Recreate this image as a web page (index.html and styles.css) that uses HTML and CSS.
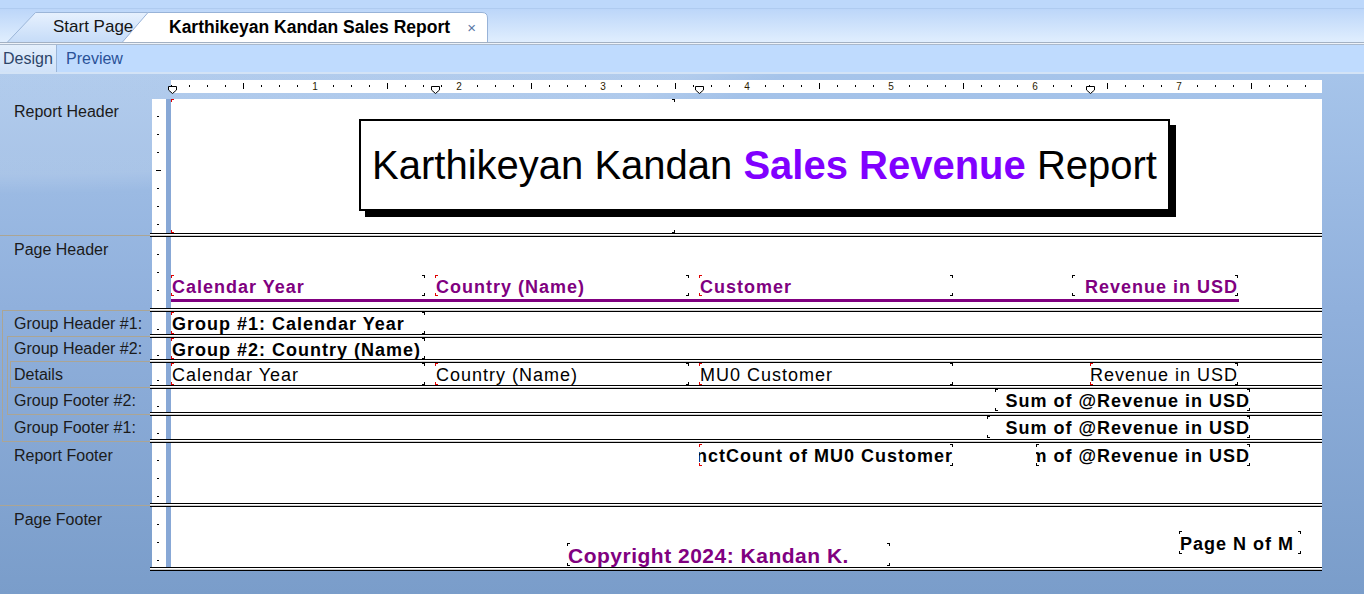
FILE: index.html
```html
<!DOCTYPE html>
<html>
<head>
<meta charset="utf-8">
<title>Karthikeyan Kandan Sales Report</title>
<link rel="stylesheet" href="styles.css">
</head>
<body>
<div class="app">
  <div class="topstrip"></div>
  <div class="tabbar">
    <div class="tab start">
      <svg width="145" height="30" viewBox="0 0 145 30"><defs><linearGradient id="sg" x1="0" y1="0" x2="0" y2="1"><stop offset="0" stop-color="#e7f1fe"/><stop offset="1" stop-color="#c6dcf8"/></linearGradient></defs><path d="M0.5 30 L28.5 0.5 H144.5 V30" fill="url(#sg)" stroke="#9bb5d8"/></svg>
      <span class="txt">Start Page</span>
    </div>
    <div class="tab active">
      <svg width="366" height="30" viewBox="0 0 366 30"><path d="M0.5 30 L26 0.5 H360 Q365.5 0.5 365.5 6 V30" fill="#fff" stroke="#98b3d8"/></svg>
      <span class="txt">Karthikeyan Kandan Sales Report</span>
      <span class="close">×</span>
    </div>
  </div>
  <div class="sep"></div>
  <div class="subtabs">
    <div class="subtab on">Design</div>
    <div class="subtab">Preview</div>
  </div>
  <div class="main">
    <div class="ruler">
      <div class="nums"><span><i>1</i></span><span><i>2</i></span><span><i>3</i></span><span><i>4</i></span><span><i>5</i></span><span><i>6</i></span><span><i>7</i></span></div>
      <svg class="mk m0" width="9" height="8" viewBox="0 0 9 8"><path d="M0.5 0.5 H8.5 V4 L4.5 7.5 L0.5 4 Z" fill="#fff" stroke="#000"/></svg>
      <svg class="mk m1" width="9" height="8" viewBox="0 0 9 8"><path d="M0.5 0.5 H8.5 V4 L4.5 7.5 L0.5 4 Z" fill="#fff" stroke="#000"/></svg>
      <svg class="mk m2" width="9" height="8" viewBox="0 0 9 8"><path d="M0.5 0.5 H8.5 V4 L4.5 7.5 L0.5 4 Z" fill="#fff" stroke="#000"/></svg>
      <svg class="mk m3" width="9" height="8" viewBox="0 0 9 8"><path d="M0.5 0.5 H8.5 V4 L4.5 7.5 L0.5 4 Z" fill="#fff" stroke="#000"/></svg>
    </div>

    <div class="designer">
      <!-- Report Header -->
      <div class="row h-rh">
        <div class="lbl top">Report Header</div>
        <div class="band"><div class="vr"></div><div class="bar"></div>
          <div class="canvas stack">
            <div class="f empty red-l"></div>
            <div class="title">Karthikeyan Kandan&nbsp;<b>Sales Revenue</b>&nbsp;Report</div>
          </div>
        </div>
      </div>
      <div class="row dv"><div class="lbl d-full"></div><div class="dline"></div></div>

      <!-- Page Header -->
      <div class="row h-ph">
        <div class="lbl top">Page Header</div>
        <div class="band"><div class="vr"></div><div class="bar"></div>
          <div class="canvas col">
            <div class="fields ph-fields">
              <div class="f b pu w254 h21 red-l">Calendar Year</div>
              <div class="f b pu w254 h21 ml10 red-l">Country (Name)</div>
              <div class="f b pu w254 h21 ml10 red-l">Customer</div>
              <div class="f b pu r w166 h21 ml119">Revenue in USD</div>
            </div>
            <div class="pline"></div>
          </div>
        </div>
      </div>
      <div class="row dv"><div class="lbl d-ph-g1"></div><div class="dline"></div></div>

      <!-- Group Header #1 -->
      <div class="row h22">
        <div class="lbl mid g1">Group Header #1:</div>
        <div class="band"><div class="vr"></div><div class="bar"></div>
          <div class="canvas">
            <div class="f b w254 red-l">Group #1: Calendar Year</div>
          </div>
        </div>
      </div>
      <div class="row dv"><div class="lbl d-g1-g2"></div><div class="dline"></div></div>

      <!-- Group Header #2 -->
      <div class="row h21">
        <div class="lbl mid g2">Group Header #2:</div>
        <div class="band"><div class="vr"></div><div class="bar"></div>
          <div class="canvas">
            <div class="f b w254 h21 red-l">Group #2: Country (Name)</div>
          </div>
        </div>
      </div>
      <div class="row dv"><div class="lbl d-g2-det"></div><div class="dline"></div></div>

      <!-- Details -->
      <div class="row h22">
        <div class="lbl mid det">Details</div>
        <div class="band"><div class="vr"></div><div class="bar"></div>
          <div class="canvas">
            <div class="f w254 red-l">Calendar Year</div>
            <div class="f w254 ml10 red-l">Country (Name)</div>
            <div class="f w254 ml10 red-l">MU0 Customer</div>
            <div class="f r w148 ml137 red-l">Revenue in USD</div>
          </div>
        </div>
      </div>
      <div class="row dv"><div class="lbl d-det-gf2"></div><div class="dline"></div></div>

      <!-- Group Footer #2 -->
      <div class="row h23">
        <div class="lbl mid gf2">Group Footer #2:</div>
        <div class="band"><div class="vr"></div><div class="bar"></div>
          <div class="canvas">
            <div class="f b r w255 ml824">Sum of @Revenue in USD</div>
          </div>
        </div>
      </div>
      <div class="row dv"><div class="lbl d-gf2-gf1"></div><div class="dline"></div></div>

      <!-- Group Footer #1 -->
      <div class="row h23">
        <div class="lbl mid gf1">Group Footer #1:</div>
        <div class="band"><div class="vr"></div><div class="bar"></div>
          <div class="canvas">
            <div class="f b r w263 ml816">Sum of @Revenue in USD</div>
          </div>
        </div>
      </div>
      <div class="row dv"><div class="lbl d-gf1-rf"></div><div class="dline"></div></div>

      <!-- Report Footer -->
      <div class="row h60">
        <div class="lbl top">Report Footer</div>
        <div class="band"><div class="vr"></div><div class="bar"></div>
          <div class="canvas">
            <div class="f b r clip w254 ml528 mt1 red-l">DistinctCount of MU0 Customer</div>
            <div class="f b r clip w214 ml83 mt1">Sum of @Revenue in USD</div>
          </div>
        </div>
      </div>
      <div class="row dv"><div class="lbl d-full"></div><div class="dline"></div></div>

      <!-- Page Footer -->
      <div class="row h60">
        <div class="lbl top">Page Footer</div>
        <div class="band"><div class="vr"></div><div class="bar"></div>
          <div class="canvas">
            <div class="f b pu copy w323 h23 ml396 mt36">Copyright 2024: Kandan K.</div>
            <div class="f b w122 h23 ml289 mt24">Page N of M</div>
          </div>
        </div>
      </div>
      <div class="row dv"><div class="lbl"></div><div class="dline"></div></div>
    </div>
  </div>
</div>
</body>
</html>
```

FILE: styles.css
```css
* { box-sizing: border-box; margin: 0; padding: 0; }
html, body { width: 1364px; height: 594px; overflow: hidden; }
body {
  font-family: "Liberation Sans", Arial, sans-serif;
  background: #7a9dca;
  color: #000;
}
.app { width: 1364px; height: 594px; display: flex; flex-direction: column; }

/* ---------- top chrome ---------- */
.topstrip { height: 9px; background: #bdd8fb; border-bottom: 1px solid #afcbf0; }
.tabbar {
  height: 33px;
  background: linear-gradient(#bcd6f9, #e0eefe);
  display: flex;
  align-items: flex-end;
  padding-left: 7px;
}
.tab { position: relative; height: 30px; display: flex; align-items: center; flex: none; }
.tab svg { position: absolute; left: 0; top: 0; }
.tab span { position: relative; white-space: nowrap; }
.start { width: 145px; }
.start .txt { margin-left: 46px; font-size: 17px; color: #151515; }
.active { width: 366px; margin-left: -30px; }
.active .txt { margin-left: 47px; font-size: 17.5px; font-weight: bold; color: #000; }
.close { margin-left: auto; margin-right: 12px; color: #5877a6; font-size: 15px; }

.sep { height: 3px; border-top: 1px solid #a3b1c3; border-bottom: 1px solid #aab9cc; background: #eef3f9; }
.subtabs {
  height: 29px;
  background: #bfdbfe;
  border-bottom: 2px solid #d3e3f6;
  display: flex;
}
.subtab { font-size: 16px; line-height: 27px; color: #2a5298; margin-left: 9px; }
.subtab.on {
  margin-left: 0;
  width: 57px;
  padding-left: 3px;
  background: linear-gradient(#e4effc, #d0e2f8);
  border-right: 1px solid #9cb6d8;
  color: #2d4569;
}

/* ---------- workspace ---------- */
.main {
  flex: 1;
  padding-top: 6px;
  background:
    radial-gradient(ellipse 1100px 240px at 0% -12%, rgba(255,255,255,0.13) 0 68%, rgba(255,255,255,0) 76%),
    linear-gradient(#a6c4ea, #90b0dc 45%, #7a9dca);
}

.ruler {
  position: relative;
  margin-left: 171px;
  width: 1151px;
  height: 13px;
  background:
    repeating-linear-gradient(to right, #000 0 1px, transparent 1px 144px) 72px 3px / 100% 6px no-repeat,
    repeating-linear-gradient(to right, #000 0 1px, transparent 1px 18px) 0 5px / 100% 2px no-repeat,
    #fff;
}
.nums { display: flex; padding-left: 72px; }
.nums span { flex: none; width: 144px; text-align: center; font-size: 10px; line-height: 13px; }
.nums i { font-style: normal; background: #fff; padding: 0 2px; color: #2a1a00; }
.mk { position: absolute; top: 6px; }
.m0 { left: -3px; }
.m1 { left: 260px; }
.m2 { left: 524px; }
.m3 { left: 915px; }

.designer { margin-top: 6px; width: 1322px; }
.row { display: flex; }
.h-rh { height: 134px; }
.h-ph { height: 71px; }
.h21 { height: 21px; }
.h22 { height: 22px; }
.h23 { height: 23px; }
.h60 { height: 60px; }
.dv { height: 4px; }

.lbl {
  --ln: #aba594;
  width: 150px;
  flex: none;
  padding-left: 14px;
  font-size: 16px;
  color: #1b1b1b;
  white-space: nowrap;
}
.lbl.top { padding-top: 4px; line-height: 18px; }
.lbl.mid { display: flex; align-items: center; padding-top: 1px; }

/* group outline lines in label column */
.d-full { background: linear-gradient(var(--ln), var(--ln)) 0 2px / 100% 1px no-repeat; }
.d-ph-g1 {
  background:
    linear-gradient(var(--ln), var(--ln)) 2px 2px / 100% 1px no-repeat,
    linear-gradient(var(--ln), var(--ln)) 2px 2px / 1px 100% no-repeat;
}
.g1, .gf1 { background: linear-gradient(var(--ln), var(--ln)) 2px 0 / 1px 100% no-repeat; }
.d-g1-g2 {
  background:
    linear-gradient(var(--ln), var(--ln)) 2px 0 / 1px 100% no-repeat,
    linear-gradient(var(--ln), var(--ln)) 7px 2px / 100% 1px no-repeat,
    linear-gradient(var(--ln), var(--ln)) 7px 2px / 1px 100% no-repeat;
}
.g2, .gf2 {
  background:
    linear-gradient(var(--ln), var(--ln)) 2px 0 / 1px 100% no-repeat,
    linear-gradient(var(--ln), var(--ln)) 7px 0 / 1px 100% no-repeat;
}
.d-g2-det {
  background:
    linear-gradient(var(--ln), var(--ln)) 2px 0 / 1px 100% no-repeat,
    linear-gradient(var(--ln), var(--ln)) 7px 0 / 1px 100% no-repeat,
    linear-gradient(var(--ln), var(--ln)) 10px 2px / 100% 1px no-repeat,
    linear-gradient(var(--ln), var(--ln)) 10px 2px / 1px 100% no-repeat;
}
.det {
  background:
    linear-gradient(var(--ln), var(--ln)) 2px 0 / 1px 100% no-repeat,
    linear-gradient(var(--ln), var(--ln)) 7px 0 / 1px 100% no-repeat,
    linear-gradient(var(--ln), var(--ln)) 10px 0 / 1px 100% no-repeat;
}
.d-det-gf2 {
  background:
    linear-gradient(var(--ln), var(--ln)) 2px 0 / 1px 100% no-repeat,
    linear-gradient(var(--ln), var(--ln)) 7px 0 / 1px 100% no-repeat,
    linear-gradient(var(--ln), var(--ln)) 10px 0 / 1px 3px no-repeat,
    linear-gradient(var(--ln), var(--ln)) 10px 2px / 100% 1px no-repeat;
}
.d-gf2-gf1 {
  background:
    linear-gradient(var(--ln), var(--ln)) 2px 0 / 1px 100% no-repeat,
    linear-gradient(var(--ln), var(--ln)) 7px 0 / 1px 3px no-repeat,
    linear-gradient(var(--ln), var(--ln)) 7px 2px / 100% 1px no-repeat;
}
.d-gf1-rf {
  background:
    linear-gradient(var(--ln), var(--ln)) 2px 0 / 1px 3px no-repeat,
    linear-gradient(var(--ln), var(--ln)) 2px 2px / 100% 1px no-repeat;
}

.band { display: flex; margin-left: 2px; flex: none; }
.vr {
  width: 14px;
  flex: none;
  background:
    repeating-linear-gradient(to bottom, transparent 0 71px, #000 71px 72px) 4px 0 / 5px 100% no-repeat,
    repeating-linear-gradient(to bottom, transparent 0 17px, #000 17px 18px) 5px 0 / 2px 100% no-repeat,
    #fff;
}
.bar { width: 5px; flex: none; background: #88a8d6; }
.canvas { width: 1151px; flex: none; background: #fff; display: flex; align-items: flex-start; }
.canvas.stack { display: grid; }
.canvas.stack > * { grid-area: 1 / 1; }
.canvas.col { flex-direction: column; }

.dline {
  width: 1172px;
  height: 4px;
  border-top: 1px solid #000;
  border-bottom: 1px solid #000;
  background: linear-gradient(#fff 0 1px, #cfcfcf 1px);
}

/* ---------- report fields ---------- */
.f {
  --l: #000;
  --r: #000;
  flex: none;
  height: 22px;
  display: flex;
  align-items: center;
  white-space: nowrap;
  padding-left: 1px;
  padding-top: 2px;
  font-size: 18px;
  line-height: 18px;
  letter-spacing: 1px;
  color: #000;
  background:
    linear-gradient(var(--l), var(--l)) 0 0 / 3px 1px,
    linear-gradient(var(--l), var(--l)) 0 0 / 1px 3px,
    linear-gradient(var(--r), var(--r)) 100% 0 / 3px 1px,
    linear-gradient(var(--r), var(--r)) 100% 0 / 1px 3px,
    linear-gradient(var(--l), var(--l)) 0 100% / 3px 1px,
    linear-gradient(var(--l), var(--l)) 0 100% / 1px 3px,
    linear-gradient(var(--r), var(--r)) 100% 100% / 3px 1px,
    linear-gradient(var(--r), var(--r)) 100% 100% / 1px 3px;
  background-repeat: no-repeat;
}
.f.red-l { --l: #e00000; }
.f.r { justify-content: flex-end; padding-left: 0; }
.f.clip { overflow: hidden; }
.b { font-weight: bold; }
.pu { color: #800080; }
.copy { font-size: 21px; line-height: 21px; letter-spacing: 0.5px; }
.empty { width: 504px; height: 134px; }

.w122 { width: 122px; }
.w148 { width: 148px; }
.w166 { width: 166px; }
.w214 { width: 214px; }
.w254 { width: 254px; }
.w255 { width: 255px; }
.w263 { width: 263px; }
.w323 { width: 323px; }
.f.h21 { height: 21px; }
.f.h23 { height: 23px; }
.ml10 { margin-left: 10px; }
.ml83 { margin-left: 83px; }
.ml119 { margin-left: 119px; }
.ml137 { margin-left: 137px; }
.ml289 { margin-left: 289px; }
.ml396 { margin-left: 396px; }
.ml528 { margin-left: 528px; }
.ml816 { margin-left: 816px; }
.ml824 { margin-left: 824px; }
.mt1 { margin-top: 1px; }
.mt24 { margin-top: 24px; }
.mt36 { margin-top: 36px; }

.ph-fields { display: flex; margin-top: 38px; }
.pline { width: 1068px; height: 3px; margin-top: 3px; background: #800080; }

.title {
  margin: 20px 0 0 188px;
  width: 811px;
  height: 92px;
  border: 2px solid #000;
  box-shadow: 6px 6px 0 #000;
  background: #fff;
  display: flex;
  align-items: center;
  justify-content: center;
  font-size: 40px;
  white-space: nowrap;
}
.title b { color: #8000ff; }
```
